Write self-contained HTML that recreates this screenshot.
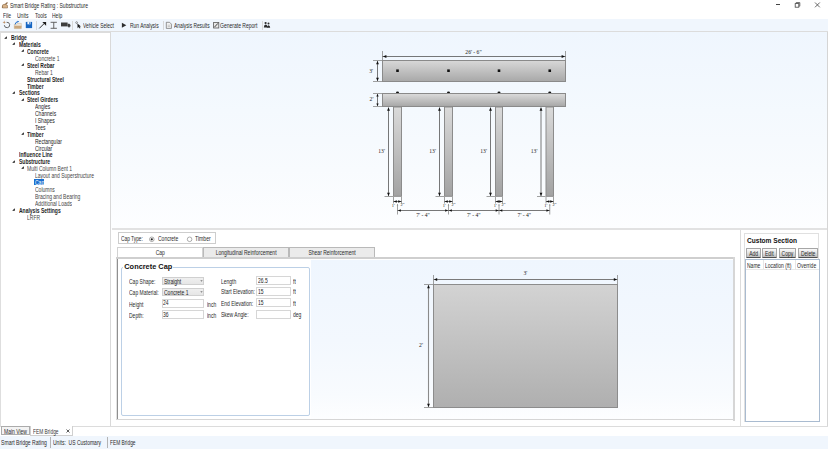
<!DOCTYPE html>
<html><head><meta charset="utf-8"><style>
html,body{margin:0;padding:0;width:828px;height:449px;overflow:hidden;background:#fff;position:relative}
.t{position:absolute;white-space:nowrap;line-height:1;font-family:"Liberation Sans",sans-serif}
.r{position:absolute}
</style></head><body>
<svg class="r" style="left:1px;top:1px" width="8" height="8" viewBox="0 0 8 8">
<path d="M1 6.5 L6.5 1.5" stroke="#8a6a4a" stroke-width="1.2"/><path d="M1.5 4 Q4 2 6.5 4.5 L6.5 7 L1.5 7 Z" fill="#d9b48a" stroke="#7a5a3a" stroke-width="0.5"/></svg>
<div class="t" style="left:10.10px;top:3.30px;font-size:10px;font-weight:400;color:#2a2a2a;transform:scale(0.5030,0.66);transform-origin:0 0;">Smart Bridge Rating : Substructure</div>
<div class="r" style="left:776px;top:4.3px;width:4.3px;height:0.7px;background:#444"></div>
<svg class="r" style="left:794px;top:2px" width="7" height="6" viewBox="0 0 7 6"><rect x="1.2" y="1.6" width="3.6" height="3.6" fill="none" stroke="#444" stroke-width="0.8"/><path d="M2.2 1.2 V0.6 H5.8 V4.2 H5.2" fill="none" stroke="#444" stroke-width="0.8"/></svg>
<svg class="r" style="left:814px;top:2px" width="7" height="6" viewBox="0 0 7 6"><path d="M1 0.5 L5.8 5.3 M5.8 0.5 L1 5.3" stroke="#444" stroke-width="0.8"/></svg>
<div class="t" style="left:3.00px;top:13.30px;font-size:10px;font-weight:400;color:#2a2a2a;transform:scale(0.5000,0.66);transform-origin:0 0;">File</div>
<div class="t" style="left:16.90px;top:13.30px;font-size:10px;font-weight:400;color:#2a2a2a;transform:scale(0.5000,0.66);transform-origin:0 0;">Units</div>
<div class="t" style="left:34.70px;top:13.30px;font-size:10px;font-weight:400;color:#2a2a2a;transform:scale(0.5000,0.66);transform-origin:0 0;">Tools</div>
<div class="t" style="left:52.00px;top:13.30px;font-size:10px;font-weight:400;color:#2a2a2a;transform:scale(0.5000,0.66);transform-origin:0 0;">Help</div>
<div class="r" style="left:0px;top:19px;width:828px;height:12px;background:#f0f6fd"></div>
<div class="r" style="left:0px;top:31px;width:828px;height:1.5px;background:#dcdcdc"></div>
<div class="r" style="left:36px;top:21px;width:0.8px;height:9px;background:#d8d8d8"></div>
<div class="r" style="left:72px;top:21px;width:0.8px;height:9px;background:#d8d8d8"></div>
<div class="r" style="left:163px;top:21px;width:0.8px;height:9px;background:#d8d8d8"></div>
<div class="r" style="left:261.5px;top:21px;width:0.8px;height:9px;background:#d8d8d8"></div>
<svg class="r" style="left:0;top:19px" width="280" height="12" viewBox="0 0 280 12">
<path d="M6.6 3.3 A2.7 2.7 0 1 1 4.3 6.2" fill="none" stroke="#555" stroke-width="0.9"/>
<path d="M4.2 1.6 L4.7 2.9 L6 3.3 L4.7 3.7 L4.2 5 L3.7 3.7 L2.4 3.3 L3.7 2.9 Z" fill="#b8875a"/>
<path d="M14.3 5.2 H16.5 L17.3 4.4 H21.3 V9.6 H14.3 Z" fill="#eee6da" stroke="#c9b08e" stroke-width="0.5"/>
<path d="M14.3 6.8 H21.6 L21.3 9.6 H14.3 Z" fill="#c9a77e"/>
<path d="M15.2 5.4 Q15.4 2.8 18.2 2.6" fill="none" stroke="#1e6cc8" stroke-width="1"/><path d="M17.6 1.7 L19.2 2.6 L17.6 3.5 Z" fill="#1e6cc8"/>
<path d="M25.8 2.9 H32.1 V9.1 H25.8 Z" fill="#1766c2"/><rect x="27.4" y="2.9" width="3.2" height="2.4" fill="#f0f5fb"/><rect x="29.3" y="3.2" width="0.9" height="1.8" fill="#1766c2"/>
<path d="M39.3 9.4 L44.6 4.1" stroke="#1a1a1a" stroke-width="0.9"/><path d="M42.3 2.9 L46.1 2.9 L46.1 6.7 Z" fill="#1a1a1a"/>
<path d="M50.6 3.3 H56.9 M53.75 3.3 V9.3 M50.6 9.3 H56.9" stroke="#555" stroke-width="0.9"/>
<rect x="61" y="3.5" width="6.6" height="3.9" fill="#3e3e3e"/><path d="M67.6 4.8 H69.4 L70.5 6.1 V7.4 H67.6 Z" fill="#3e3e3e"/><circle cx="69" cy="7.5" r="0.9" fill="#3e3e3e"/>
<circle cx="76.6" cy="3.6" r="0.9" fill="none" stroke="#555" stroke-width="0.6"/>
<path d="M77.4 4.4 L77.6 9.2 L78.7 8.1 L79.7 9.6 L80.5 9.1 L79.5 7.6 L81 7.4 Z" fill="#1a1a1a"/>
<path d="M121.9 3.7 L126.3 6.2 L121.9 8.8 Z" fill="#2e2e2e"/>
<path d="M166.3 3.3 H169.6 L171.4 5.1 V9.4 H166.3 Z" fill="#f4f4f4" stroke="#6a6a6a" stroke-width="0.7"/><path d="M167.6 6.2 H170.2 M167.6 7.6 H170.2" stroke="#999" stroke-width="0.5"/>
<rect x="213.6" y="3.4" width="5.2" height="5.6" fill="#e8e8e8" stroke="#5a5a5a" stroke-width="0.8"/><path d="M214.4 8.2 L218 4.3" stroke="#444" stroke-width="1"/>
<circle cx="265.6" cy="4.0" r="1.1" fill="#2a2a2a"/><circle cx="268.5" cy="4.6" r="1.0" fill="#2a2a2a"/><path d="M263.8 8.6 Q264 5.6 265.6 5.6 Q267.3 5.6 267.4 8.6 Z" fill="#2a2a2a"/><path d="M266.8 8.8 Q267 6.3 268.5 6.3 Q270.1 6.3 270.2 8.8 Z" fill="#2a2a2a"/>
</svg>
<div class="t" style="left:83.00px;top:23.30px;font-size:10px;font-weight:400;color:#2a2a2a;transform:scale(0.4900,0.66);transform-origin:0 0;">Vehicle Select</div>
<div class="t" style="left:129.50px;top:23.30px;font-size:10px;font-weight:400;color:#2a2a2a;transform:scale(0.4960,0.66);transform-origin:0 0;">Run Analysis</div>
<div class="t" style="left:173.60px;top:23.30px;font-size:10px;font-weight:400;color:#2a2a2a;transform:scale(0.4850,0.66);transform-origin:0 0;">Analysis Results</div>
<div class="t" style="left:220.40px;top:23.30px;font-size:10px;font-weight:400;color:#2a2a2a;transform:scale(0.5020,0.66);transform-origin:0 0;">Generate Report</div>
<div class="r" style="left:0px;top:32px;width:0.8px;height:394px;background:#dedede"></div>
<div class="r" style="left:110px;top:32px;width:1px;height:394px;background:#d9d9d9"></div>
<svg class="r" style="left:4.30px;top:35.50px" width="3" height="3" viewBox="0 0 3 3"><path d="M2.8 0.2 V2.8 H0.2 Z" fill="#111"/></svg>
<div class="t" style="left:10.50px;top:35.30px;font-size:10px;font-weight:700;color:#1e1e1e;transform:scale(0.5000,0.66);transform-origin:0 0;">Bridge</div>
<svg class="r" style="left:12.45px;top:42.39px" width="3" height="3" viewBox="0 0 3 3"><path d="M2.8 0.2 V2.8 H0.2 Z" fill="#111"/></svg>
<div class="t" style="left:18.65px;top:42.30px;font-size:10px;font-weight:700;color:#1e1e1e;transform:scale(0.5000,0.66);transform-origin:0 0;">Materials</div>
<svg class="r" style="left:20.60px;top:49.29px" width="3" height="3" viewBox="0 0 3 3"><path d="M2.8 0.2 V2.8 H0.2 Z" fill="#111"/></svg>
<div class="t" style="left:26.80px;top:49.30px;font-size:10px;font-weight:700;color:#1e1e1e;transform:scale(0.5000,0.66);transform-origin:0 0;">Concrete</div>
<div class="t" style="left:34.95px;top:56.30px;font-size:10px;font-weight:400;color:#464646;transform:scale(0.5000,0.66);transform-origin:0 0;">Concrete 1</div>
<svg class="r" style="left:20.60px;top:63.07px" width="3" height="3" viewBox="0 0 3 3"><path d="M2.8 0.2 V2.8 H0.2 Z" fill="#111"/></svg>
<div class="t" style="left:26.80px;top:63.30px;font-size:10px;font-weight:700;color:#1e1e1e;transform:scale(0.5000,0.66);transform-origin:0 0;">Steel Rebar</div>
<div class="t" style="left:34.95px;top:70.30px;font-size:10px;font-weight:400;color:#464646;transform:scale(0.5000,0.66);transform-origin:0 0;">Rebar 1</div>
<div class="t" style="left:26.80px;top:77.30px;font-size:10px;font-weight:700;color:#1e1e1e;transform:scale(0.5000,0.66);transform-origin:0 0;">Structural Steel</div>
<div class="t" style="left:26.80px;top:84.30px;font-size:10px;font-weight:700;color:#1e1e1e;transform:scale(0.5000,0.66);transform-origin:0 0;">Timber</div>
<svg class="r" style="left:12.45px;top:90.64px" width="3" height="3" viewBox="0 0 3 3"><path d="M2.8 0.2 V2.8 H0.2 Z" fill="#111"/></svg>
<div class="t" style="left:18.65px;top:90.30px;font-size:10px;font-weight:700;color:#1e1e1e;transform:scale(0.5000,0.66);transform-origin:0 0;">Sections</div>
<svg class="r" style="left:20.60px;top:97.54px" width="3" height="3" viewBox="0 0 3 3"><path d="M2.8 0.2 V2.8 H0.2 Z" fill="#111"/></svg>
<div class="t" style="left:26.80px;top:97.30px;font-size:10px;font-weight:700;color:#1e1e1e;transform:scale(0.5000,0.66);transform-origin:0 0;">Steel Girders</div>
<div class="t" style="left:34.95px;top:104.30px;font-size:10px;font-weight:400;color:#1c1c1c;transform:scale(0.5000,0.66);transform-origin:0 0;">Angles</div>
<div class="t" style="left:34.95px;top:111.30px;font-size:10px;font-weight:400;color:#1c1c1c;transform:scale(0.5000,0.66);transform-origin:0 0;">Channels</div>
<div class="t" style="left:34.95px;top:118.30px;font-size:10px;font-weight:400;color:#1c1c1c;transform:scale(0.5000,0.66);transform-origin:0 0;">I Shapes</div>
<div class="t" style="left:34.95px;top:125.30px;font-size:10px;font-weight:400;color:#1c1c1c;transform:scale(0.5000,0.66);transform-origin:0 0;">Tees</div>
<svg class="r" style="left:20.60px;top:132.00px" width="3" height="3" viewBox="0 0 3 3"><path d="M2.8 0.2 V2.8 H0.2 Z" fill="#111"/></svg>
<div class="t" style="left:26.80px;top:132.30px;font-size:10px;font-weight:700;color:#1e1e1e;transform:scale(0.5000,0.66);transform-origin:0 0;">Timber</div>
<div class="t" style="left:34.95px;top:139.30px;font-size:10px;font-weight:400;color:#1c1c1c;transform:scale(0.5000,0.66);transform-origin:0 0;">Rectangular</div>
<div class="t" style="left:34.95px;top:146.30px;font-size:10px;font-weight:400;color:#1c1c1c;transform:scale(0.5000,0.66);transform-origin:0 0;">Circular</div>
<div class="t" style="left:18.65px;top:152.30px;font-size:10px;font-weight:700;color:#1e1e1e;transform:scale(0.5000,0.66);transform-origin:0 0;">Influence Line</div>
<svg class="r" style="left:12.45px;top:159.57px" width="3" height="3" viewBox="0 0 3 3"><path d="M2.8 0.2 V2.8 H0.2 Z" fill="#111"/></svg>
<div class="t" style="left:18.65px;top:159.30px;font-size:10px;font-weight:700;color:#1e1e1e;transform:scale(0.5000,0.66);transform-origin:0 0;">Substructure</div>
<svg class="r" style="left:20.60px;top:166.47px" width="3" height="3" viewBox="0 0 3 3"><path d="M2.8 0.2 V2.8 H0.2 Z" fill="#111"/></svg>
<div class="t" style="left:26.80px;top:166.30px;font-size:10px;font-weight:400;color:#464646;transform:scale(0.5000,0.66);transform-origin:0 0;">Multi Column Bent 1</div>
<div class="t" style="left:34.95px;top:173.30px;font-size:10px;font-weight:400;color:#464646;transform:scale(0.5000,0.66);transform-origin:0 0;">Layout and Superstructure</div>
<div class="r" style="left:34.4px;top:178.7px;width:9.6px;height:6.3px;background:#1a6fd0"></div>
<div class="t" style="left:34.95px;top:180.30px;font-size:10px;font-weight:400;color:#fff;transform:scale(0.5000,0.66);transform-origin:0 0;">Cap</div>
<div class="t" style="left:34.95px;top:187.30px;font-size:10px;font-weight:400;color:#464646;transform:scale(0.5000,0.66);transform-origin:0 0;">Columns</div>
<div class="t" style="left:34.95px;top:194.30px;font-size:10px;font-weight:400;color:#464646;transform:scale(0.5000,0.66);transform-origin:0 0;">Bracing and Bearing</div>
<div class="t" style="left:34.95px;top:201.30px;font-size:10px;font-weight:400;color:#464646;transform:scale(0.5000,0.66);transform-origin:0 0;">Additional Loads</div>
<svg class="r" style="left:12.45px;top:207.82px" width="3" height="3" viewBox="0 0 3 3"><path d="M2.8 0.2 V2.8 H0.2 Z" fill="#111"/></svg>
<div class="t" style="left:18.65px;top:208.30px;font-size:10px;font-weight:700;color:#1e1e1e;transform:scale(0.5000,0.66);transform-origin:0 0;">Analysis Settings</div>
<div class="t" style="left:26.80px;top:215.30px;font-size:10px;font-weight:400;color:#464646;transform:scale(0.5000,0.66);transform-origin:0 0;">LRFR</div>
<div class="r" style="left:111px;top:32px;width:716px;height:196.5px;background:linear-gradient(#eff6fe 0%, #f4f9fe 40%, #f8fbfe 70%, #fdfeff 100%)"></div>
<div class="r" style="left:826.5px;top:32px;width:1px;height:394px;background:#d5d5d5"></div>
<div class="r" style="left:112px;top:228px;width:714.5px;height:2px;background:#e2e2e2"></div>
<div class="r" style="left:118.2px;top:232.4px;width:97.6px;height:11.8px;border:1px solid #cdcdcd;box-sizing:border-box;background:#fff"></div>
<div class="t" style="left:120.70px;top:236.30px;font-size:10px;font-weight:400;color:#2a2a2a;transform:scale(0.4820,0.66);transform-origin:0 0;">Cap Type:</div>
<svg class="r" style="left:148px;top:235.5px" width="45" height="7" viewBox="0 0 45 7"><circle cx="3.8" cy="3.3" r="2.3" fill="#fff" stroke="#777" stroke-width="0.6"/><circle cx="3.8" cy="3.3" r="1.1" fill="#222"/><circle cx="41.6" cy="3.3" r="2.3" fill="#fff" stroke="#777" stroke-width="0.6"/></svg>
<div class="t" style="left:157.50px;top:236.30px;font-size:10px;font-weight:400;color:#2a2a2a;transform:scale(0.5000,0.66);transform-origin:0 0;">Concrete</div>
<div class="t" style="left:194.90px;top:236.30px;font-size:10px;font-weight:400;color:#2a2a2a;transform:scale(0.5100,0.66);transform-origin:0 0;">Timber</div>
<div class="r" style="left:203.3px;top:247.2px;width:86.2px;height:10px;background:#ebebeb;border:1px solid #b9b9b9;border-bottom:none;box-sizing:border-box"></div>
<div class="r" style="left:289.3px;top:247.2px;width:86.2px;height:10px;background:#ebebeb;border:1px solid #b9b9b9;border-bottom:none;box-sizing:border-box"></div>
<div class="r" style="left:116.8px;top:246.6px;width:86.6px;height:11px;background:#fff;border:1px solid #d2d2d2;border-bottom:none;box-sizing:border-box"></div>
<div class="t" style="left:116.80px;top:250.30px;width:173.20px;text-align:center;font-size:10px;color:#2a2a2a;transform:scale(0.5,0.66);transform-origin:0 0">Cap</div>
<div class="t" style="left:203.30px;top:250.30px;width:172.40px;text-align:center;font-size:10px;color:#2a2a2a;transform:scale(0.5,0.66);transform-origin:0 0">Longitudinal Reinforcement</div>
<div class="t" style="left:289.30px;top:250.30px;width:172.40px;text-align:center;font-size:10px;color:#2a2a2a;transform:scale(0.5,0.66);transform-origin:0 0">Shear Reinforcement</div>
<div class="r" style="left:116px;top:257px;width:618.5px;height:1.8px;background:#cfcfcf"></div>
<div class="r" style="left:116px;top:258.8px;width:1px;height:161px;background:#e2e2e2"></div>
<div class="r" style="left:117px;top:258.8px;width:1px;height:160px;background:#8f8f8f"></div>
<div class="r" style="left:116px;top:419.2px;width:618.5px;height:1.3px;background:#d6d6d6"></div>
<div class="r" style="left:733px;top:257px;width:1.5px;height:163.5px;background:#d6d6d6"></div>
<div class="r" style="left:121.3px;top:266.7px;width:188.9px;height:149.2px;border:1px solid #bcd0e6;border-radius:2px;box-sizing:border-box"></div>
<div class="t" style="left:123.3px;top:262.6px;font-size:7.38px;font-weight:700;color:#111;background:#fff;padding:0 1px">Concrete Cap</div>
<div class="t" style="left:129.40px;top:279.30px;font-size:10px;font-weight:400;color:#2a2a2a;transform:scale(0.5000,0.66);transform-origin:0 0;">Cap Shape:</div>
<div class="t" style="left:129.40px;top:290.30px;font-size:10px;font-weight:400;color:#2a2a2a;transform:scale(0.5000,0.66);transform-origin:0 0;">Cap Material:</div>
<div class="t" style="left:129.40px;top:302.30px;font-size:10px;font-weight:400;color:#2a2a2a;transform:scale(0.5000,0.66);transform-origin:0 0;">Height</div>
<div class="t" style="left:129.40px;top:313.30px;font-size:10px;font-weight:400;color:#2a2a2a;transform:scale(0.5000,0.66);transform-origin:0 0;">Depth:</div>
<div class="r" style="left:161.7px;top:276.6px;width:42.8px;height:8.6px;background:linear-gradient(#efefef,#e6e6e6);border:1px solid #d0d0d0;box-sizing:border-box"></div>
<div class="t" style="left:164.00px;top:279.30px;font-size:10px;font-weight:400;color:#1c1c1c;transform:scale(0.5000,0.66);transform-origin:0 0;">Straight</div>
<svg class="r" style="left:199.5px;top:279.80px" width="3" height="2" viewBox="0 0 3 2"><path d="M0.3 0.3 H2.7 L1.5 1.7 Z" fill="#777"/></svg>
<div class="r" style="left:161.7px;top:287.5px;width:42.8px;height:8.6px;background:linear-gradient(#efefef,#e6e6e6);border:1px solid #d0d0d0;box-sizing:border-box"></div>
<div class="t" style="left:164.00px;top:290.30px;font-size:10px;font-weight:400;color:#1c1c1c;transform:scale(0.5000,0.66);transform-origin:0 0;">Concrete 1</div>
<svg class="r" style="left:199.5px;top:290.70px" width="3" height="2" viewBox="0 0 3 2"><path d="M0.3 0.3 H2.7 L1.5 1.7 Z" fill="#777"/></svg>
<div class="r" style="left:161.7px;top:298.5px;width:42.8px;height:9.1px;background:#fff;border:1px solid #d6d6d6;box-sizing:border-box"></div>
<div class="t" style="left:163.00px;top:300.30px;font-size:10px;font-weight:400;color:#1c1c1c;transform:scale(0.5000,0.66);transform-origin:0 0;">24</div>
<div class="r" style="left:161.7px;top:310.2px;width:42.8px;height:9.1px;background:#fff;border:1px solid #d6d6d6;box-sizing:border-box"></div>
<div class="t" style="left:163.00px;top:312.30px;font-size:10px;font-weight:400;color:#1c1c1c;transform:scale(0.5000,0.66);transform-origin:0 0;">36</div>
<div class="t" style="left:207.00px;top:302.30px;font-size:10px;font-weight:400;color:#2a2a2a;transform:scale(0.5000,0.66);transform-origin:0 0;">inch</div>
<div class="t" style="left:207.00px;top:313.30px;font-size:10px;font-weight:400;color:#2a2a2a;transform:scale(0.5000,0.66);transform-origin:0 0;">inch</div>
<div class="t" style="left:220.80px;top:279.30px;font-size:10px;font-weight:400;color:#2a2a2a;transform:scale(0.5000,0.66);transform-origin:0 0;">Length</div>
<div class="r" style="left:256.3px;top:276.3px;width:34.5px;height:9.2px;background:#fff;border:1px solid #d6d6d6;box-sizing:border-box"></div>
<div class="t" style="left:257.80px;top:278.30px;font-size:10px;font-weight:400;color:#1c1c1c;transform:scale(0.5000,0.66);transform-origin:0 0;">26.5</div>
<div class="t" style="left:292.90px;top:279.30px;font-size:10px;font-weight:400;color:#2a2a2a;transform:scale(0.5000,0.66);transform-origin:0 0;">ft</div>
<div class="t" style="left:220.80px;top:289.30px;font-size:10px;font-weight:400;color:#2a2a2a;transform:scale(0.5000,0.66);transform-origin:0 0;">Start Elevation:</div>
<div class="r" style="left:256.3px;top:287.1px;width:34.5px;height:9.2px;background:#fff;border:1px solid #d6d6d6;box-sizing:border-box"></div>
<div class="t" style="left:257.80px;top:289.30px;font-size:10px;font-weight:400;color:#1c1c1c;transform:scale(0.5000,0.66);transform-origin:0 0;">15</div>
<div class="t" style="left:292.90px;top:289.30px;font-size:10px;font-weight:400;color:#2a2a2a;transform:scale(0.5000,0.66);transform-origin:0 0;">ft</div>
<div class="t" style="left:220.80px;top:301.30px;font-size:10px;font-weight:400;color:#2a2a2a;transform:scale(0.5000,0.66);transform-origin:0 0;">End Elevation:</div>
<div class="r" style="left:256.3px;top:298.3px;width:34.5px;height:9.2px;background:#fff;border:1px solid #d6d6d6;box-sizing:border-box"></div>
<div class="t" style="left:257.80px;top:300.30px;font-size:10px;font-weight:400;color:#1c1c1c;transform:scale(0.5000,0.66);transform-origin:0 0;">15</div>
<div class="t" style="left:292.90px;top:301.30px;font-size:10px;font-weight:400;color:#2a2a2a;transform:scale(0.5000,0.66);transform-origin:0 0;">ft</div>
<div class="t" style="left:220.80px;top:312.30px;font-size:10px;font-weight:400;color:#2a2a2a;transform:scale(0.5000,0.66);transform-origin:0 0;">Skew Angle:</div>
<div class="r" style="left:256.3px;top:310.0px;width:34.5px;height:9.2px;background:#fff;border:1px solid #d6d6d6;box-sizing:border-box"></div>
<div class="t" style="left:292.90px;top:312.30px;font-size:10px;font-weight:400;color:#2a2a2a;transform:scale(0.5000,0.66);transform-origin:0 0;">deg</div>
<div class="r" style="left:311px;top:259.8px;width:422px;height:159.4px;background:linear-gradient(#eff6fe 0%,#f3f8fe 50%,#f8fbfe 85%,#fdfeff 100%)"></div>
<div class="r" style="left:740px;top:230px;width:1px;height:195.5px;background:#dcdcdc"></div>
<div class="r" style="left:744.4px;top:232.5px;width:75px;height:189px;border:1px solid #e0e0e0;box-sizing:border-box"></div>
<div class="t" style="left:747.00px;top:238.10px;font-size:6.57px;font-weight:700;color:#111;">Custom Section</div>
<div class="r" style="left:745.6px;top:248px;width:15.20px;height:9.7px;background:linear-gradient(#fbfbfb,#e4e4e4 45%,#bdbdbd);border:0.8px solid #a6a6a6;border-bottom:1px solid #505050;border-radius:1px;box-sizing:border-box"></div>
<div class="t" style="left:745.60px;top:251.30px;width:30.40px;text-align:center;font-size:10px;color:#2a2a2a;transform:scale(0.5,0.66);transform-origin:0 0">Add</div>
<div class="r" style="left:762.3px;top:248px;width:14.70px;height:9.7px;background:linear-gradient(#fbfbfb,#e4e4e4 45%,#bdbdbd);border:0.8px solid #a6a6a6;border-bottom:1px solid #505050;border-radius:1px;box-sizing:border-box"></div>
<div class="t" style="left:762.30px;top:251.30px;width:29.40px;text-align:center;font-size:10px;color:#2a2a2a;transform:scale(0.5,0.66);transform-origin:0 0">Edit</div>
<div class="r" style="left:779px;top:248px;width:16.80px;height:9.7px;background:linear-gradient(#fbfbfb,#e4e4e4 45%,#bdbdbd);border:0.8px solid #a6a6a6;border-bottom:1px solid #505050;border-radius:1px;box-sizing:border-box"></div>
<div class="t" style="left:779.00px;top:251.30px;width:33.60px;text-align:center;font-size:10px;color:#2a2a2a;transform:scale(0.5,0.66);transform-origin:0 0">Copy</div>
<div class="r" style="left:797.8px;top:248px;width:20.30px;height:9.7px;background:linear-gradient(#fbfbfb,#e4e4e4 45%,#bdbdbd);border:0.8px solid #a6a6a6;border-bottom:1px solid #505050;border-radius:1px;box-sizing:border-box"></div>
<div class="t" style="left:797.80px;top:251.30px;width:40.60px;text-align:center;font-size:10px;color:#2a2a2a;transform:scale(0.5,0.66);transform-origin:0 0">Delete</div>
<div class="r" style="left:744.6px;top:259.2px;width:75px;height:162.5px;border:1px solid #a9bbd0;box-sizing:border-box;background:#fff"></div>
<div class="r" style="left:745.6px;top:269.3px;width:73px;height:0.8px;background:#e8e8e8"></div>
<div class="r" style="left:762.8px;top:260.2px;width:0.8px;height:9.1px;background:#e6e6e6"></div>
<div class="r" style="left:794.8px;top:260.2px;width:0.8px;height:9.1px;background:#e6e6e6"></div>
<div class="t" style="left:747.30px;top:263.30px;font-size:10px;font-weight:400;color:#2a2a2a;transform:scale(0.5000,0.66);transform-origin:0 0;">Name</div>
<div class="t" style="left:765.40px;top:263.30px;font-size:10px;font-weight:400;color:#2a2a2a;transform:scale(0.5000,0.66);transform-origin:0 0;">Location (ft)</div>
<div class="t" style="left:797.30px;top:263.30px;font-size:10px;font-weight:400;color:#2a2a2a;transform:scale(0.5000,0.66);transform-origin:0 0;">Override</div>
<div class="r" style="left:0px;top:425.5px;width:828px;height:1px;background:#dcdcdc"></div>
<div class="r" style="left:1px;top:426px;width:28.5px;height:9.2px;background:#f3f3f3;border:1px solid #ababab;box-sizing:border-box"></div>
<div class="r" style="left:29.5px;top:426px;width:43px;height:9.5px;background:#fff;border:1px solid #d0d0d0;border-top:none;box-sizing:border-box"></div>
<div class="t" style="left:3.50px;top:429.30px;font-size:10px;font-weight:400;color:#2a2a2a;transform:scale(0.5000,0.66);transform-origin:0 0;">Main View</div>
<div class="t" style="left:32.60px;top:429.30px;font-size:10px;font-weight:400;color:#363636;transform:scale(0.4830,0.66);transform-origin:0 0;">FEM Bridge</div>
<svg class="r" style="left:65.5px;top:429px" width="4" height="4" viewBox="0 0 4 4"><path d="M0.5 0.5 L3.5 3.5 M3.5 0.5 L0.5 3.5" stroke="#333" stroke-width="0.8"/></svg>
<div class="r" style="left:0px;top:435.5px;width:828px;height:13.5px;background:#f0f6fd"></div>
<div class="r" style="left:50px;top:437px;width:1px;height:11px;background:#b4b4b4"></div>
<div class="r" style="left:106.5px;top:437px;width:1px;height:11px;background:#b4b4b4"></div>
<div class="t" style="left:1.20px;top:440.30px;font-size:10px;font-weight:400;color:#2a2a2a;transform:scale(0.5090,0.66);transform-origin:0 0;">Smart Bridge Rating</div>
<div class="t" style="left:53.10px;top:440.30px;font-size:10px;font-weight:400;color:#2a2a2a;transform:scale(0.5000,0.66);transform-origin:0 0;">Units:&nbsp; US Customary</div>
<div class="t" style="left:109.70px;top:440.30px;font-size:10px;font-weight:400;color:#2a2a2a;transform:scale(0.4830,0.66);transform-origin:0 0;">FEM Bridge</div>
<svg class="r" style="left:0;top:0;z-index:5" width="828" height="449" viewBox="0 0 828 449"><defs><linearGradient id="gv" x1="0" y1="0" x2="0" y2="1"><stop offset="0" stop-color="#d8d8d8"/><stop offset="1" stop-color="#a8a8a8"/></linearGradient><linearGradient id="gc" x1="0" y1="0" x2="0" y2="1"><stop offset="0" stop-color="#dcdcdc"/><stop offset="1" stop-color="#a6a6a6"/></linearGradient><linearGradient id="gs" x1="0" y1="0" x2="0" y2="1"><stop offset="0" stop-color="#dadada"/><stop offset="1" stop-color="#a2a2a2"/></linearGradient><linearGradient id="gx" x1="0" y1="0" x2="0" y2="1"><stop offset="0" stop-color="#d3d3d3"/><stop offset="1" stop-color="#afafaf"/></linearGradient></defs><rect x="382.5" y="60.5" width="183" height="21" fill="url(#gv)" stroke="#8a8a8a" stroke-width="1"/><line x1="382.50" y1="51.00" x2="382.50" y2="60.00" stroke="#888" stroke-width="0.8"/><line x1="565.50" y1="51.00" x2="565.50" y2="60.00" stroke="#888" stroke-width="0.8"/><line x1="382.50" y1="56.50" x2="565.50" y2="56.50" stroke="#555" stroke-width="0.8"/><path d="M383.00 56.50 L386.40 55.00 L386.40 58.00 Z" fill="#111"/><path d="M565.00 56.50 L561.60 58.00 L561.60 55.00 Z" fill="#111"/><text x="473.50" y="53.50" font-family="Liberation Serif" font-size="5.6" fill="#1a1a1a" text-anchor="middle">26' - 6"</text><rect x="396.20" y="69.4" width="2.6" height="2.6" fill="#111"/><rect x="447.20" y="69.4" width="2.6" height="2.6" fill="#111"/><rect x="497.70" y="69.4" width="2.6" height="2.6" fill="#111"/><rect x="548.45" y="69.4" width="2.6" height="2.6" fill="#111"/><line x1="373.00" y1="60.50" x2="382.00" y2="60.50" stroke="#888" stroke-width="0.8"/><line x1="373.00" y1="81.50" x2="382.00" y2="81.50" stroke="#888" stroke-width="0.8"/><line x1="377.50" y1="61.00" x2="377.50" y2="81.00" stroke="#555" stroke-width="0.8"/><path d="M377.50 61.00 L378.95 64.30 L376.05 64.30 Z" fill="#111"/><path d="M377.50 81.00 L376.05 77.70 L378.95 77.70 Z" fill="#111"/><text x="371.20" y="73.30" font-family="Liberation Serif" font-size="5.6" fill="#1a1a1a" text-anchor="middle">3'</text><ellipse cx="397.50" cy="92.6" rx="1.5" ry="1.1" fill="#111"/><ellipse cx="448.50" cy="92.6" rx="1.5" ry="1.1" fill="#111"/><ellipse cx="499.00" cy="92.6" rx="1.5" ry="1.1" fill="#111"/><ellipse cx="549.75" cy="92.6" rx="1.5" ry="1.1" fill="#111"/><rect x="382.5" y="93.5" width="183" height="13" fill="url(#gc)" stroke="#8a8a8a" stroke-width="1"/><line x1="373.00" y1="93.50" x2="382.00" y2="93.50" stroke="#888" stroke-width="0.8"/><line x1="373.00" y1="106.50" x2="382.00" y2="106.50" stroke="#888" stroke-width="0.8"/><line x1="377.50" y1="94.00" x2="377.50" y2="106.00" stroke="#555" stroke-width="0.8"/><path d="M377.50 94.00 L378.70 96.60 L376.30 96.60 Z" fill="#111"/><path d="M377.50 106.00 L376.30 103.40 L378.70 103.40 Z" fill="#111"/><text x="371.50" y="101.40" font-family="Liberation Serif" font-size="5.6" fill="#1a1a1a" text-anchor="middle">2'</text><rect x="393.50" y="107" width="8.00" height="89.3" fill="url(#gs)" stroke="#8c8c8c" stroke-width="1"/><line x1="388.50" y1="107.50" x2="388.50" y2="196.00" stroke="#555" stroke-width="0.8"/><path d="M388.50 107.50 L389.95 110.80 L387.05 110.80 Z" fill="#111"/><path d="M388.50 196.00 L387.05 192.70 L389.95 192.70 Z" fill="#111"/><line x1="384.50" y1="196.50" x2="393.00" y2="196.50" stroke="#888" stroke-width="0.8"/><text x="381.60" y="153.20" font-family="Liberation Serif" font-size="5.6" fill="#1a1a1a" text-anchor="middle">13'</text><line x1="393.50" y1="197.00" x2="393.50" y2="203.50" stroke="#888" stroke-width="0.8"/><line x1="401.50" y1="197.00" x2="401.50" y2="203.50" stroke="#888" stroke-width="0.8"/><line x1="393.50" y1="201.50" x2="401.50" y2="201.50" stroke="#555" stroke-width="0.8"/><path d="M393.60 201.50 L396.80 200.15 L396.80 202.85 Z" fill="#111"/><path d="M401.40 201.50 L398.20 202.85 L398.20 200.15 Z" fill="#111"/><text x="393.20" y="206.80" font-family="Liberation Serif" font-size="4.4" fill="#1a1a1a" text-anchor="middle">1'</text><text x="402.60" y="206.10" font-family="Liberation Serif" font-size="4.4" fill="#1a1a1a" text-anchor="middle">2"</text><text x="397.50" y="207.16" font-family="Liberation Serif" font-size="4.0" fill="#1a1a1a" text-anchor="middle">-</text><line x1="397.50" y1="204.00" x2="397.50" y2="214.50" stroke="#888" stroke-width="0.8"/><rect x="444.50" y="107" width="8.00" height="89.3" fill="url(#gs)" stroke="#8c8c8c" stroke-width="1"/><line x1="439.50" y1="107.50" x2="439.50" y2="196.00" stroke="#555" stroke-width="0.8"/><path d="M439.50 107.50 L440.95 110.80 L438.05 110.80 Z" fill="#111"/><path d="M439.50 196.00 L438.05 192.70 L440.95 192.70 Z" fill="#111"/><line x1="435.50" y1="196.50" x2="444.00" y2="196.50" stroke="#888" stroke-width="0.8"/><text x="432.60" y="153.20" font-family="Liberation Serif" font-size="5.6" fill="#1a1a1a" text-anchor="middle">13'</text><line x1="444.50" y1="197.00" x2="444.50" y2="203.50" stroke="#888" stroke-width="0.8"/><line x1="452.50" y1="197.00" x2="452.50" y2="203.50" stroke="#888" stroke-width="0.8"/><line x1="444.50" y1="201.50" x2="452.50" y2="201.50" stroke="#555" stroke-width="0.8"/><path d="M444.60 201.50 L447.80 200.15 L447.80 202.85 Z" fill="#111"/><path d="M452.40 201.50 L449.20 202.85 L449.20 200.15 Z" fill="#111"/><text x="444.20" y="206.80" font-family="Liberation Serif" font-size="4.4" fill="#1a1a1a" text-anchor="middle">1'</text><text x="453.60" y="206.10" font-family="Liberation Serif" font-size="4.4" fill="#1a1a1a" text-anchor="middle">2"</text><text x="448.50" y="207.16" font-family="Liberation Serif" font-size="4.0" fill="#1a1a1a" text-anchor="middle">-</text><line x1="448.50" y1="204.00" x2="448.50" y2="214.50" stroke="#888" stroke-width="0.8"/><rect x="495.50" y="107" width="7.00" height="89.3" fill="url(#gs)" stroke="#8c8c8c" stroke-width="1"/><line x1="490.50" y1="107.50" x2="490.50" y2="196.00" stroke="#555" stroke-width="0.8"/><path d="M490.50 107.50 L491.95 110.80 L489.05 110.80 Z" fill="#111"/><path d="M490.50 196.00 L489.05 192.70 L491.95 192.70 Z" fill="#111"/><line x1="486.50" y1="196.50" x2="495.00" y2="196.50" stroke="#888" stroke-width="0.8"/><text x="483.60" y="153.20" font-family="Liberation Serif" font-size="5.6" fill="#1a1a1a" text-anchor="middle">13'</text><line x1="495.50" y1="197.00" x2="495.50" y2="203.50" stroke="#888" stroke-width="0.8"/><line x1="502.50" y1="197.00" x2="502.50" y2="203.50" stroke="#888" stroke-width="0.8"/><line x1="495.50" y1="201.50" x2="502.50" y2="201.50" stroke="#555" stroke-width="0.8"/><path d="M495.60 201.50 L498.80 200.15 L498.80 202.85 Z" fill="#111"/><path d="M502.40 201.50 L499.20 202.85 L499.20 200.15 Z" fill="#111"/><text x="495.20" y="206.80" font-family="Liberation Serif" font-size="4.4" fill="#1a1a1a" text-anchor="middle">1'</text><text x="503.60" y="206.10" font-family="Liberation Serif" font-size="4.4" fill="#1a1a1a" text-anchor="middle">2"</text><text x="499.00" y="207.16" font-family="Liberation Serif" font-size="4.0" fill="#1a1a1a" text-anchor="middle">-</text><line x1="499.00" y1="204.00" x2="499.00" y2="214.50" stroke="#888" stroke-width="0.8"/><rect x="546.00" y="107" width="7.50" height="89.3" fill="url(#gs)" stroke="#8c8c8c" stroke-width="1"/><line x1="541.00" y1="107.50" x2="541.00" y2="196.00" stroke="#555" stroke-width="0.8"/><path d="M541.00 107.50 L542.45 110.80 L539.55 110.80 Z" fill="#111"/><path d="M541.00 196.00 L539.55 192.70 L542.45 192.70 Z" fill="#111"/><line x1="537.00" y1="196.50" x2="545.50" y2="196.50" stroke="#888" stroke-width="0.8"/><text x="534.10" y="153.20" font-family="Liberation Serif" font-size="5.6" fill="#1a1a1a" text-anchor="middle">13'</text><line x1="546.00" y1="197.00" x2="546.00" y2="203.50" stroke="#888" stroke-width="0.8"/><line x1="553.50" y1="197.00" x2="553.50" y2="203.50" stroke="#888" stroke-width="0.8"/><line x1="546.00" y1="201.50" x2="553.50" y2="201.50" stroke="#555" stroke-width="0.8"/><path d="M546.10 201.50 L549.30 200.15 L549.30 202.85 Z" fill="#111"/><path d="M553.40 201.50 L550.20 202.85 L550.20 200.15 Z" fill="#111"/><text x="545.70" y="206.80" font-family="Liberation Serif" font-size="4.4" fill="#1a1a1a" text-anchor="middle">1'</text><text x="554.60" y="206.10" font-family="Liberation Serif" font-size="4.4" fill="#1a1a1a" text-anchor="middle">2"</text><text x="549.75" y="207.16" font-family="Liberation Serif" font-size="4.0" fill="#1a1a1a" text-anchor="middle">-</text><line x1="549.75" y1="204.00" x2="549.75" y2="214.50" stroke="#888" stroke-width="0.8"/><line x1="397.50" y1="210.50" x2="448.50" y2="210.50" stroke="#555" stroke-width="0.8"/><path d="M398.00 210.50 L400.80 209.30 L400.80 211.70 Z" fill="#111"/><path d="M448.00 210.50 L445.20 211.70 L445.20 209.30 Z" fill="#111"/><text x="423.00" y="216.90" font-family="Liberation Serif" font-size="5.6" fill="#1a1a1a" text-anchor="middle">7' - 4"</text><line x1="448.50" y1="210.50" x2="499.00" y2="210.50" stroke="#555" stroke-width="0.8"/><path d="M449.00 210.50 L451.80 209.30 L451.80 211.70 Z" fill="#111"/><path d="M498.50 210.50 L495.70 211.70 L495.70 209.30 Z" fill="#111"/><text x="473.75" y="216.90" font-family="Liberation Serif" font-size="5.6" fill="#1a1a1a" text-anchor="middle">7' - 4"</text><line x1="499.00" y1="210.50" x2="549.75" y2="210.50" stroke="#555" stroke-width="0.8"/><path d="M499.50 210.50 L502.30 209.30 L502.30 211.70 Z" fill="#111"/><path d="M549.25 210.50 L546.45 211.70 L546.45 209.30 Z" fill="#111"/><text x="524.38" y="216.90" font-family="Liberation Serif" font-size="5.6" fill="#1a1a1a" text-anchor="middle">7' - 4"</text><rect x="433.5" y="284.5" width="184" height="123" fill="url(#gx)" stroke="#8c8c8c" stroke-width="1"/><line x1="433.50" y1="275.00" x2="433.50" y2="284.00" stroke="#888" stroke-width="0.8"/><line x1="617.50" y1="275.00" x2="617.50" y2="284.00" stroke="#888" stroke-width="0.8"/><line x1="433.50" y1="279.50" x2="617.50" y2="279.50" stroke="#7a7a7a" stroke-width="1"/><path d="M434.00 279.50 L437.20 278.10 L437.20 280.90 Z" fill="#111"/><path d="M617.00 279.50 L613.80 280.90 L613.80 278.10 Z" fill="#111"/><text x="525.30" y="275.40" font-family="Liberation Serif" font-size="5.6" fill="#1a1a1a" text-anchor="middle">3'</text><line x1="424.00" y1="284.50" x2="433.00" y2="284.50" stroke="#888" stroke-width="0.8"/><line x1="424.00" y1="407.50" x2="433.00" y2="407.50" stroke="#888" stroke-width="0.8"/><line x1="428.50" y1="285.00" x2="428.50" y2="407.00" stroke="#8a8a8a" stroke-width="1.1"/><path d="M428.50 285.00 L429.90 288.20 L427.10 288.20 Z" fill="#111"/><path d="M428.50 407.00 L427.10 403.80 L429.90 403.80 Z" fill="#111"/><text x="421.00" y="347.40" font-family="Liberation Serif" font-size="5.6" fill="#1a1a1a" text-anchor="middle">2'</text></svg>
</body></html>
